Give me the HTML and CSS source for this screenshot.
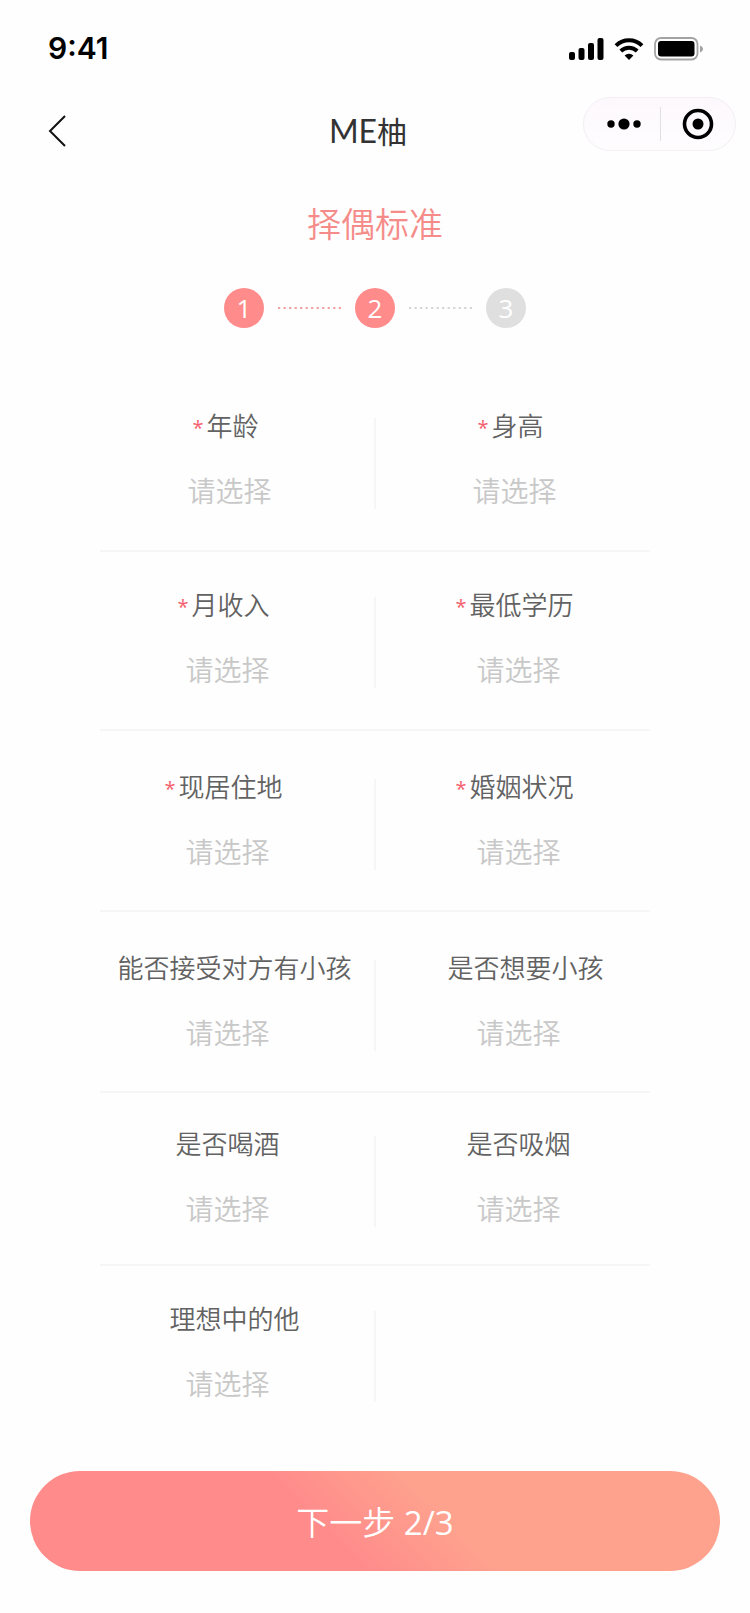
FILE: index.html
```html
<!DOCTYPE html>
<html lang="zh-CN">
<head>
<meta charset="utf-8">
<meta name="viewport" content="width=device-width, initial-scale=1">
<title>ME柚</title>
<link rel="stylesheet" href="styles.css">
</head>
<body>
<div class="page">
  <div class="status">
    <span class="status-time">9:41</span>
    <div class="status-icons">
      <svg width="35" height="22" viewBox="0 0 35 22" aria-hidden="true">
        <rect x="0" y="14" width="6" height="8" rx="2"/>
        <rect x="9.5" y="10" width="6" height="12" rx="2"/>
        <rect x="19" y="5" width="6" height="17" rx="2"/>
        <rect x="28.5" y="0" width="6" height="22" rx="2"/>
      </svg>
      <svg width="30" height="22" viewBox="0 0 30 22" aria-hidden="true">
        <path d="M2 7.6a18.6 18.6 0 0 1 26 0" fill="none" stroke="#000" stroke-width="4"/>
        <path d="M6.8 13a11.8 11.8 0 0 1 16.4 0" fill="none" stroke="#000" stroke-width="4"/>
        <path d="M15 22l-4.4-4.4a6.4 6.4 0 0 1 8.8 0z"/>
      </svg>
      <svg width="50" height="24" viewBox="0 0 50 24" aria-hidden="true">
        <rect x="1" y="1" width="42.5" height="21.5" rx="6" fill="none" stroke="#a3a3a3" stroke-width="1.8"/>
        <rect x="4" y="4" width="36.5" height="15.5" rx="3"/>
        <path d="M46 8.5c2 .8 3 2 3 3.5s-1 2.700-3 3.500z" fill="#a3a3a3"/>
      </svg>
    </div>
  </div>

  <header class="nav">
    <button class="back" type="button" aria-label="返回">
      <svg width="18" height="32" viewBox="0 0 18 32" aria-hidden="true">
        <path d="M17 1L2 16l15 15" fill="none" stroke="#111" stroke-width="2"/>
      </svg>
    </button>
    <h1 class="nav-title"><span class="nav-latin">ME</span>柚</h1>
    <div class="capsule">
      <button class="capsule-btn capsule-more" type="button" aria-label="更多">
        <svg width="34" height="12" viewBox="0 0 34 12" aria-hidden="true">
          <circle cx="4" cy="6" r="3.700"/><circle cx="17" cy="6" r="5.600"/><circle cx="30" cy="6" r="3.700"/>
        </svg>
      </button>
      <button class="capsule-btn capsule-close" type="button" aria-label="关闭">
        <svg width="32" height="32" viewBox="0 0 32 32" aria-hidden="true">
          <circle cx="16" cy="16" r="13.500" fill="none" stroke="#000" stroke-width="3.600"/><circle cx="16" cy="16" r="5.500"/>
        </svg>
      </button>
    </div>
  </header>

  <main class="main">
    <h2 class="title">择偶标准</h2>
    <ol class="steps">
      <li class="step step-on">1</li>
      <li class="step-line" aria-hidden="true"><svg width="63" height="2" viewBox="0 0 63 2"><path d="M0 1h63" stroke="#f2a0a0" stroke-width="2" stroke-dasharray="2.200 3.320"/></svg></li>
      <li class="step step-on">2</li>
      <li class="step-line" aria-hidden="true"><svg width="63" height="2" viewBox="0 0 63 2"><path d="M0 1h63" stroke="#d4d4d4" stroke-width="2" stroke-dasharray="2.200 3.320"/></svg></li>
      <li class="step">3</li>
    </ol>

    <form class="form" id="criteria">
      <div class="row row-first">
        <div class="field"><label class="label required" for="age"><span class="star">*</span>年龄</label><select class="pick" id="age"><option>请选择</option></select></div>
        <div class="field"><label class="label required" for="height"><span class="star">*</span>身高</label><select class="pick" id="height"><option>请选择</option></select></div>
      </div>
      <div class="row">
        <div class="field"><label class="label required" for="income"><span class="star">*</span>月收入</label><select class="pick" id="income"><option>请选择</option></select></div>
        <div class="field"><label class="label required" for="education"><span class="star">*</span>最低学历</label><select class="pick" id="education"><option>请选择</option></select></div>
      </div>
      <div class="row row-tall">
        <div class="field"><label class="label required" for="city"><span class="star">*</span>现居住地</label><select class="pick" id="city"><option>请选择</option></select></div>
        <div class="field"><label class="label required" for="marital"><span class="star">*</span>婚姻状况</label><select class="pick" id="marital"><option>请选择</option></select></div>
      </div>
      <div class="row row-tall">
        <div class="field"><label class="label label-long" for="accept">能否接受对方有小孩</label><select class="pick" id="accept"><option>请选择</option></select></div>
        <div class="field"><label class="label label-long" for="want">是否想要小孩</label><select class="pick" id="want"><option>请选择</option></select></div>
      </div>
      <div class="row row-short">
        <div class="field"><label class="label" for="drink">是否喝酒</label><select class="pick" id="drink"><option>请选择</option></select></div>
        <div class="field"><label class="label" for="smoke">是否吸烟</label><select class="pick" id="smoke"><option>请选择</option></select></div>
      </div>
      <div class="row">
        <div class="field"><label class="label label-long" for="ideal">理想中的他</label><select class="pick" id="ideal"><option>请选择</option></select></div>
      </div>
    </form>
  </main>

  <footer class="footer">
    <button class="next" type="submit" form="criteria">下一步 <span class="next-count">2/3</span></button>
  </footer>
</div>
</body>
</html>
```
FILE: styles.css
```css
* { box-sizing: border-box; }

body {
  margin: 0;
  background: #fefefe;
  color: #626262;
  font-family: "Open Sans", "Noto Sans CJK SC", sans-serif;
  font-weight: 350;
}

button, select { font: inherit; border: 0; background: none; padding: 0; margin: 0; }
svg { display: block; }

.status {
  display: flex;
  justify-content: space-between;
  align-items: center;
  padding: 30px 46px 30px 48px;
}
.status-time {
  font: 600 30px/37px Inter, sans-serif;
  color: #000;
}
.status-icons { display: flex; align-items: center; gap: 10px; }

.nav {
  display: grid;
  grid-template-columns: 1fr auto 1fr;
  align-items: center;
  min-height: 68px;
  padding-right: 14px;
}
.back { justify-self: start; padding-left: 48px; }
.nav-title {
  margin: 0;
  font-size: 30px;
  line-height: 44px;
  font-weight: 400;
  color: #333;
}
.nav-latin { font-family: Lato, sans-serif; font-size: 32px; }
.capsule {
  display: grid;
  grid-template-columns: 1fr 1fr;
  align-self: start;
  justify-self: end;
  align-items: center;
  width: 153px;
  height: 54px;
  border: 1px solid #f3eff3;
  border-radius: 27px;
  background: linear-gradient(#fdf8fd, #fefdfe);
}
.capsule-btn { display: flex; justify-content: center; align-items: center; height: 34px; }
.capsule-more { padding-left: 5px; }
.capsule-close { border-left: 1px solid #e2dfe2; }

.title {
  margin: 35px 0 0;
  font-size: 34px;
  line-height: 48px;
  font-weight: 350;
  text-align: center;
  color: #f58c8a;
}

.steps {
  display: flex;
  justify-content: center;
  align-items: center;
  gap: 14px;
  margin: 40px 0 0;
  padding: 0;
  list-style: none;
}
.step {
  width: 40px;
  height: 40px;
  border-radius: 50%;
  background: #dfdfdf;
  color: #fff;
  font-size: 26px;
  line-height: 40px;
  font-weight: 400;
  text-align: center;
}
.step-on { background: #ff8b8b; }

.form { margin: 80px 100px 0; }
.row {
  display: grid;
  grid-template-columns: 1fr 1fr;
  padding: 35px 0 41px;
  border-bottom: 2px solid #f6f6f6;
}
.row-first { padding-top: 0; }
.row-tall { padding: 38px 0 40px; }
.row-short { padding: 33px 0 37px; }
.row:last-child { border-bottom: 0; }

.field {
  position: relative;
  display: flex;
  flex-direction: column;
  gap: 29px;
}
.field:nth-child(odd) { padding-right: 20px; }
.field:nth-child(even) { padding-left: 12px; }
.row-first .field:nth-child(odd) { padding-right: 16px; }
.row-first .field:nth-child(even) { padding-left: 4px; }
.field:nth-child(odd)::after {
  content: "";
  position: absolute;
  top: 10px;
  right: -1px;
  bottom: 0;
  width: 2px;
  background: #f6f6f6;
}
.label {
  display: flex;
  justify-content: center;
  height: 36px;
  font-size: 26px;
  line-height: 36px;
  white-space: nowrap;
}
.required { padding-right: 8px; }
.label-long { padding-left: 14px; }
.star { padding: 3px 3px 0 0; font-size: 20px; font-weight: 400; line-height: 33px; color: #f5606c; }
.pick {
  appearance: none;
  width: 100%;
  height: 36px;
  font-size: 28px;
  line-height: 36px;
  text-align: center;
  text-align-last: center;
  color: #c8c8c8;
}

.footer { padding: 28px 30px 42px; }
.next {
  display: block;
  width: 100%;
  height: 100px;
  border-radius: 50px;
  background: linear-gradient(45deg, #ff8b8b 42%, #fea28e 60%);
  color: #fff;
  font-size: 33px;
}
.next-count { font-weight: 400; }
```
